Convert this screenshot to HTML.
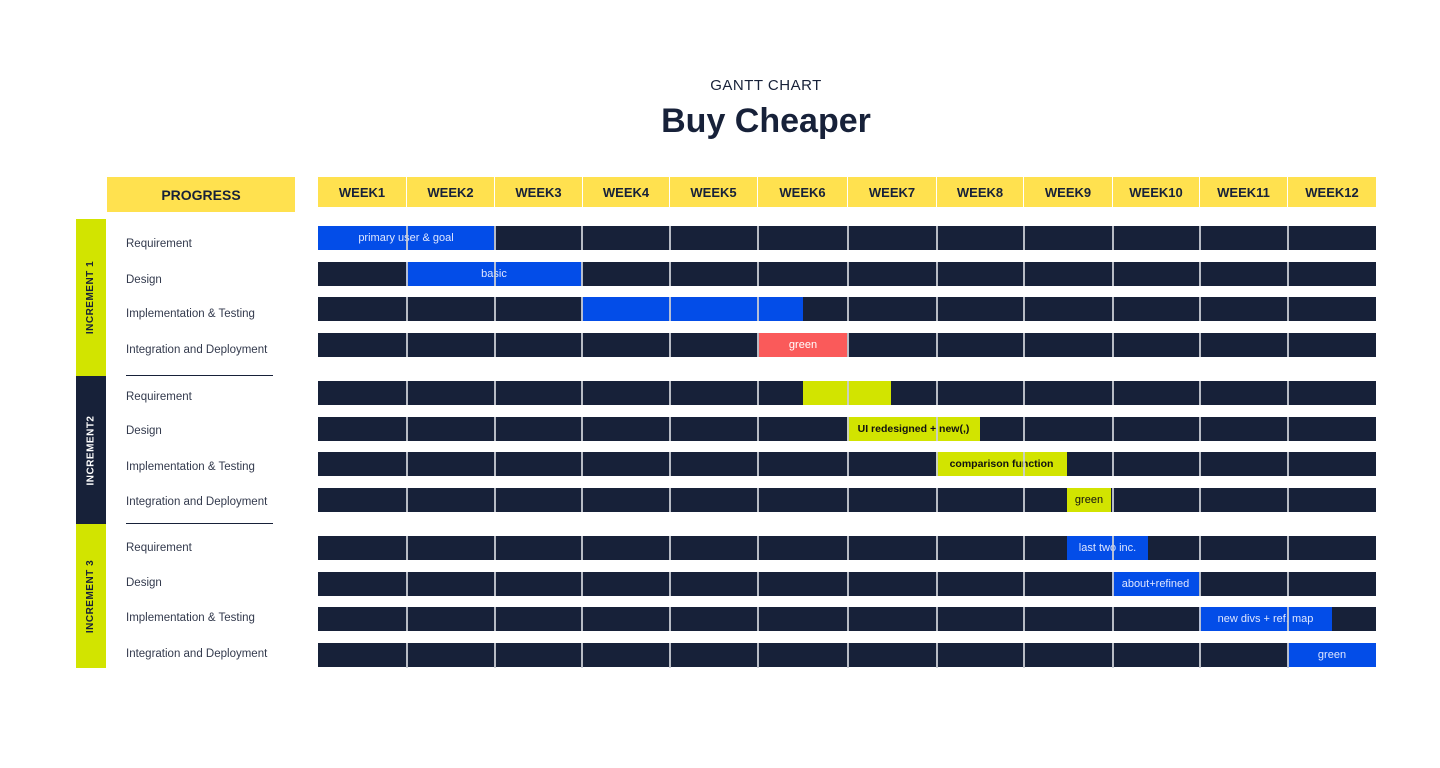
<!DOCTYPE html><html><head><style>
body{margin:0;width:1440px;height:768px;background:#fff;position:relative;overflow:hidden;font-family:"Liberation Sans",sans-serif;color:#172139}
.a{position:absolute}
.h{background:#FFE14F;top:177px;height:30px;font-weight:bold;font-size:13px;display:flex;align-items:center;justify-content:center;color:#172139;box-sizing:border-box;border-left:1.5px solid #fff}
.r{background:#172139;left:318px;width:1058px;height:24px}
.b{display:flex;align-items:center;justify-content:center;font-size:11px;height:24px;white-space:nowrap}
.bl{background:#034DE8;color:#dfe6ff}.li{background:#D2E400;color:#111}
.v{width:1.5px;background:#c9ccd4;top:226px;height:442px;opacity:.9}
.w{left:318px;width:1060px;background:#fff}
.lab{left:126px;font-size:11.5px;color:#333a4d}
.inc{left:76px;width:30px;display:flex;align-items:center;justify-content:center}
.inc span{transform:rotate(-90deg);font-weight:bold;font-size:10px;white-space:nowrap;letter-spacing:.5px}
</style></head><body>
<div class="a" style="top:77px;width:100%;text-align:center;font-size:15px;letter-spacing:.5px;color:#172139;padding-left:92px;box-sizing:border-box">GANTT CHART</div>
<div class="a" style="top:102px;width:100%;text-align:center;font-size:34px;font-weight:bold;color:#172139;padding-left:92px;box-sizing:border-box">Buy Cheaper</div>
<div class="a h" style="left:107px;width:188px;height:35px;font-size:14px;border:0">PROGRESS</div>
<div class="a h" style="left:318px;width:88px;border:0">WEEK1</div>
<div class="a h" style="left:406px;width:88px">WEEK2</div>
<div class="a h" style="left:494px;width:88px">WEEK3</div>
<div class="a h" style="left:582px;width:87px">WEEK4</div>
<div class="a h" style="left:669px;width:88px">WEEK5</div>
<div class="a h" style="left:757px;width:90px">WEEK6</div>
<div class="a h" style="left:847px;width:89px">WEEK7</div>
<div class="a h" style="left:936px;width:87px">WEEK8</div>
<div class="a h" style="left:1023px;width:89px">WEEK9</div>
<div class="a h" style="left:1112px;width:87px">WEEK10</div>
<div class="a h" style="left:1199px;width:88px">WEEK11</div>
<div class="a h" style="left:1287px;width:89px">WEEK12</div>

<div class="a inc" style="top:219px;height:157px;background:#D2E400"><span>INCREMENT 1</span></div>
<div class="a inc" style="top:376px;height:148px;background:#172139;color:#fff"><span>INCREMENT2</span></div>
<div class="a inc" style="top:524px;height:144px;background:#D2E400"><span>INCREMENT 3</span></div>
<div class="a" style="left:126px;top:375px;width:147px;height:1px;background:#172139"></div>
<div class="a" style="left:126px;top:523px;width:147px;height:1px;background:#172139"></div>

<div class="a lab" style="top:238px">Requirement</div>
<div class="a lab" style="top:274px">Design</div>
<div class="a lab" style="top:308px">Implementation &amp; Testing</div>
<div class="a lab" style="top:344px">Integration and Deployment</div>
<div class="a lab" style="top:391px">Requirement</div>
<div class="a lab" style="top:425px">Design</div>
<div class="a lab" style="top:461px">Implementation &amp; Testing</div>
<div class="a lab" style="top:496px">Integration and Deployment</div>
<div class="a lab" style="top:542px">Requirement</div>
<div class="a lab" style="top:577px">Design</div>
<div class="a lab" style="top:612px">Implementation &amp; Testing</div>
<div class="a lab" style="top:648px">Integration and Deployment</div>

<div class="a r" style="top:226px"></div><div class="a r" style="top:262px"></div><div class="a r" style="top:297px"></div><div class="a r" style="top:333px"></div>
<div class="a r" style="top:381px"></div><div class="a r" style="top:417px"></div><div class="a r" style="top:452px"></div><div class="a r" style="top:488px"></div>
<div class="a r" style="top:536px"></div><div class="a r" style="top:572px"></div><div class="a r" style="top:607px"></div><div class="a r" style="top:643px"></div>

<div class="a b bl" style="top:226px;left:318px;width:176px">primary user &amp; goal</div>
<div class="a b bl" style="top:262px;left:406px;width:176px">basic</div>
<div class="a b bl" style="top:297px;left:582px;width:221px"></div>
<div class="a b" style="top:333px;left:759px;width:88px;background:#FA5A5A;color:#fff">green</div>
<div class="a b li" style="top:381px;left:803px;width:88px"></div>
<div class="a b li" style="top:417px;left:847px;width:133px;font-weight:bold;font-size:10.5px">UI redesigned + new(,)</div>
<div class="a b li" style="top:452px;left:936px;width:131px;font-weight:bold;font-size:10.5px">comparison function</div>
<div class="a b li" style="top:488px;left:1067px;width:44px">green</div>
<div class="a b bl" style="top:536px;left:1067px;width:81px">last two inc.</div>
<div class="a b bl" style="top:572px;left:1112px;width:87px">about+refined</div>
<div class="a b bl" style="top:607px;left:1199px;width:133px">new divs + ref. map</div>
<div class="a b bl" style="top:643px;left:1288px;width:88px">green</div>

<div class="a v" style="left:406px"></div><div class="a v" style="left:494px"></div><div class="a v" style="left:581px"></div><div class="a v" style="left:669px"></div><div class="a v" style="left:757px"></div><div class="a v" style="left:847px"></div><div class="a v" style="left:936px"></div><div class="a v" style="left:1023px"></div><div class="a v" style="left:1112px"></div><div class="a v" style="left:1199px"></div><div class="a v" style="left:1287px"></div>

<div class="a w" style="top:250px;height:12px"></div>
<div class="a w" style="top:286px;height:11px"></div>
<div class="a w" style="top:321px;height:12px"></div>
<div class="a w" style="top:357px;height:24px"></div>
<div class="a w" style="top:405px;height:12px"></div>
<div class="a w" style="top:441px;height:11px"></div>
<div class="a w" style="top:476px;height:12px"></div>
<div class="a w" style="top:512px;height:24px"></div>
<div class="a w" style="top:560px;height:12px"></div>
<div class="a w" style="top:596px;height:11px"></div>
<div class="a w" style="top:631px;height:12px"></div>
</body></html>
